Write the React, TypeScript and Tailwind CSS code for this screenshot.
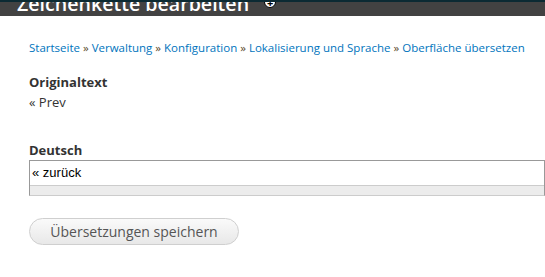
export default function App() {
  return (
    <div className="min-h-[277px] w-[545px] overflow-hidden bg-white font-['Open_Sans',sans-serif] text-[#333]">
      <header className="h-4 overflow-hidden bg-[#424242] border-t-2 border-[#0b2a33]">
        <div className="flex items-center gap-[15px] pl-[17px] -mt-[11px]">
          <h1 className="whitespace-nowrap text-[19.6px] leading-[26px] font-semibold text-white">
            Zeichenkette bearbeiten
          </h1>
          <span className="-mt-[4px] flex h-3 w-3 items-center justify-center rounded-full border border-black bg-white text-[11px] font-bold leading-none text-black">
            +
          </span>
        </div>
      </header>

      <div className="px-[29px]">
        <nav className="mt-[24px] whitespace-nowrap text-[11.5px] leading-4 text-[#5a4a2a]">
          <a className="text-[#0074bd]" href="#">Startseite</a> »{' '}
          <a className="text-[#0074bd]" href="#">Verwaltung</a> »{' '}
          <a className="text-[#0074bd]" href="#">Konfiguration</a> »{' '}
          <a className="text-[#0074bd]" href="#">Lokalisierung und Sprache</a> »{' '}
          <a className="text-[#0074bd]" href="#">Oberfläche übersetzen</a>
        </nav>

        <div className="mt-[16px]">
          <div className="text-[13px] font-bold leading-5">Originaltext</div>
          <div className="text-[13px] leading-5">« Prev</div>
        </div>

        <div className="mt-[28px]">
          <label className="block text-[13px] font-bold leading-5">Deutsch</label>
          <div className="mr-[-29px] border border-[#999] border-b-[#ccc]">
            <textarea
              className="block h-[24px] w-full resize-none bg-white px-[2px] font-[Arial,'Liberation_Sans',sans-serif] text-[13px] leading-[24px] text-black outline-none"
              defaultValue="« zurück"
            />
            <div className="h-[10px] border-t border-[#ccc] bg-[#ececec]" />
          </div>
        </div>

        <button className="mt-[22px] flex h-[27px] w-[210px] items-center justify-center rounded-full border border-[#cfcfcf] bg-gradient-to-b from-[#fafafa] to-[#e8e8e8] text-[14px] text-[#555]">
          Übersetzungen speichern
        </button>
      </div>
    </div>
  );
}
